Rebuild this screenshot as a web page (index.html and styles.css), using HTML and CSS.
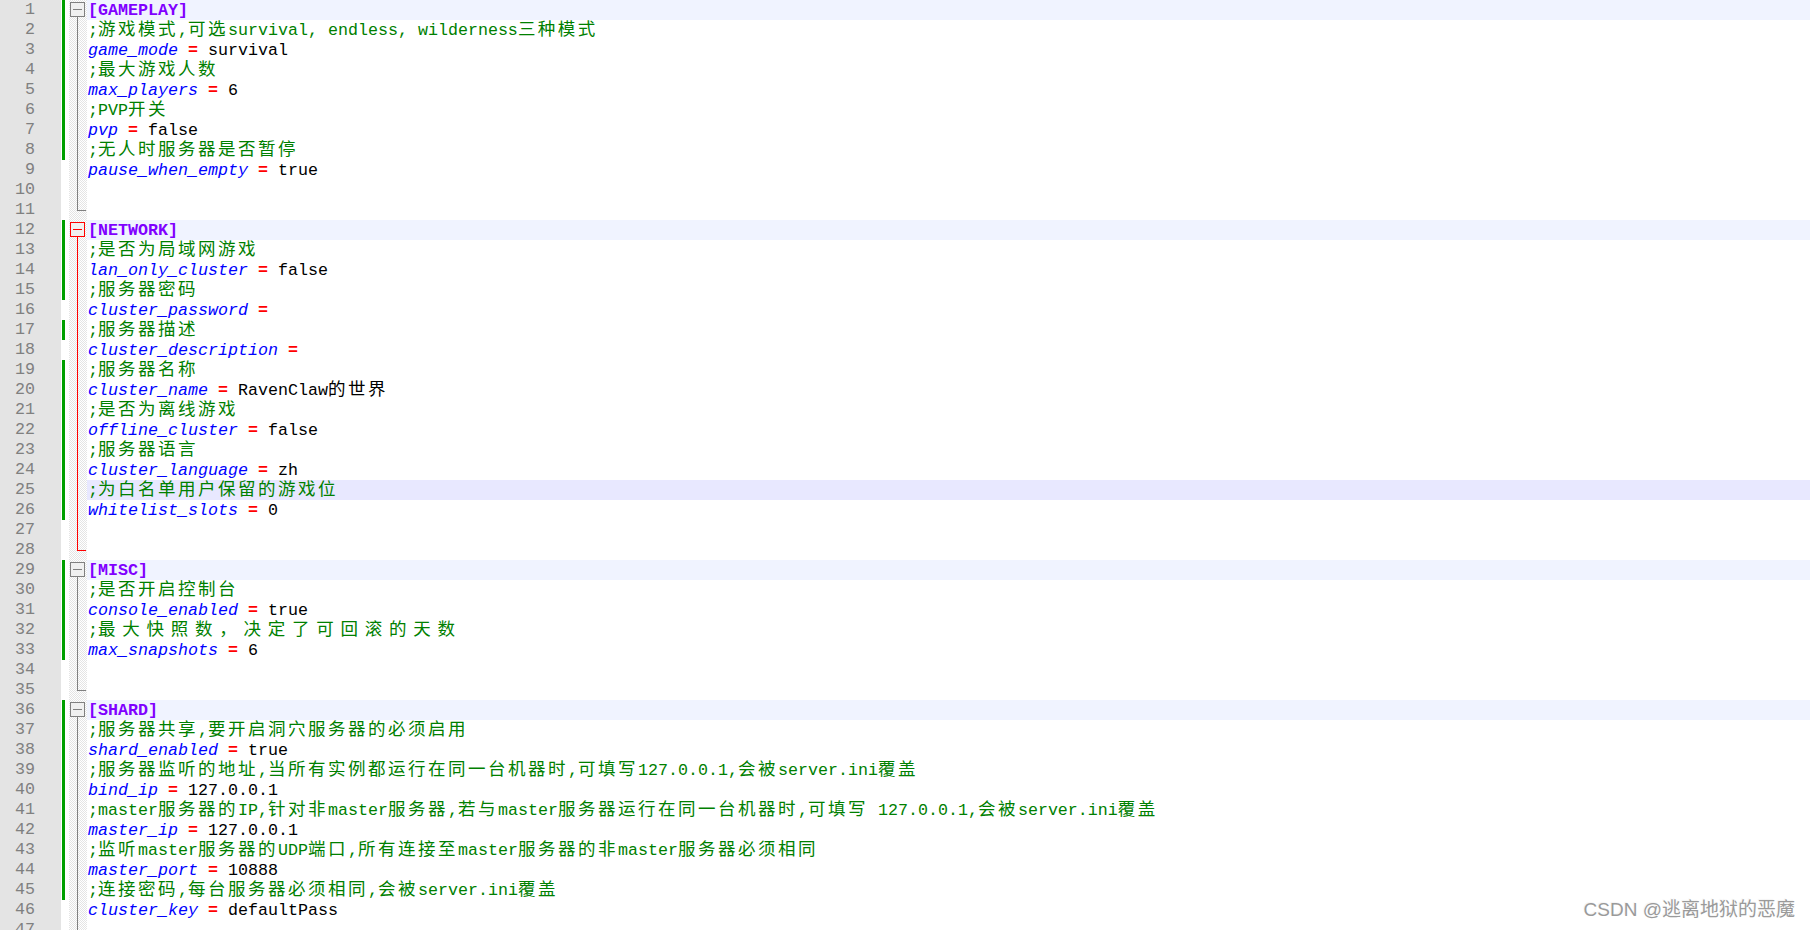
FILE: index.html
```html
<!DOCTYPE html>
<html lang="zh">
<head>
    <meta charset="UTF-8">
    <title>cluster.ini</title>
    <link rel="stylesheet" href="styles.css">
</head>
<body>
    <div class="editor">
        <div class="row"><span class="ln">1</span><span class="bm"></span><span class="ch mod"></span><span class="fold head"><i></i></span><span class="code hd"><span class="s">[GAMEPLAY]</span></span></div>
        <div class="row"><span class="ln">2</span><span class="bm"></span><span class="ch mod"></span><span class="fold body"></span><span class="code"><span class="c">;<b>游戏模式</b>,<b>可选</b>survival, endless, wilderness<b>三种模式</b></span></span></div>
        <div class="row"><span class="ln">3</span><span class="bm"></span><span class="ch mod"></span><span class="fold body"></span><span class="code"><span class="k">game_mode</span> <span class="e">=</span> survival</span></div>
        <div class="row"><span class="ln">4</span><span class="bm"></span><span class="ch mod"></span><span class="fold body"></span><span class="code"><span class="c">;<b>最大游戏人数</b></span></span></div>
        <div class="row"><span class="ln">5</span><span class="bm"></span><span class="ch mod"></span><span class="fold body"></span><span class="code"><span class="k">max_players</span> <span class="e">=</span> 6</span></div>
        <div class="row"><span class="ln">6</span><span class="bm"></span><span class="ch mod"></span><span class="fold body"></span><span class="code"><span class="c">;PVP<b>开关</b></span></span></div>
        <div class="row"><span class="ln">7</span><span class="bm"></span><span class="ch mod"></span><span class="fold body"></span><span class="code"><span class="k">pvp</span> <span class="e">=</span> false</span></div>
        <div class="row"><span class="ln">8</span><span class="bm"></span><span class="ch mod"></span><span class="fold body"></span><span class="code"><span class="c">;<b>无人时服务器是否暂停</b></span></span></div>
        <div class="row"><span class="ln">9</span><span class="bm"></span><span class="ch"></span><span class="fold body"></span><span class="code"><span class="k">pause_when_empty</span> <span class="e">=</span> true</span></div>
        <div class="row"><span class="ln">10</span><span class="bm"></span><span class="ch"></span><span class="fold body"></span><span class="code"></span></div>
        <div class="row"><span class="ln">11</span><span class="bm"></span><span class="ch"></span><span class="fold end"></span><span class="code"></span></div>

        <div class="row"><span class="ln">12</span><span class="bm"></span><span class="ch mod"></span><span class="fold head red"><i></i></span><span class="code hd"><span class="s">[NETWORK]</span></span></div>
        <div class="row"><span class="ln">13</span><span class="bm"></span><span class="ch mod"></span><span class="fold body red"></span><span class="code"><span class="c">;<b>是否为局域网游戏</b></span></span></div>
        <div class="row"><span class="ln">14</span><span class="bm"></span><span class="ch mod"></span><span class="fold body red"></span><span class="code"><span class="k">lan_only_cluster</span> <span class="e">=</span> false</span></div>
        <div class="row"><span class="ln">15</span><span class="bm"></span><span class="ch mod"></span><span class="fold body red"></span><span class="code"><span class="c">;<b>服务器密码</b></span></span></div>
        <div class="row"><span class="ln">16</span><span class="bm"></span><span class="ch"></span><span class="fold body red"></span><span class="code"><span class="k">cluster_password</span> <span class="e">=</span></span></div>
        <div class="row"><span class="ln">17</span><span class="bm"></span><span class="ch mod"></span><span class="fold body red"></span><span class="code"><span class="c">;<b>服务器描述</b></span></span></div>
        <div class="row"><span class="ln">18</span><span class="bm"></span><span class="ch"></span><span class="fold body red"></span><span class="code"><span class="k">cluster_description</span> <span class="e">=</span></span></div>
        <div class="row"><span class="ln">19</span><span class="bm"></span><span class="ch mod"></span><span class="fold body red"></span><span class="code"><span class="c">;<b>服务器名称</b></span></span></div>
        <div class="row"><span class="ln">20</span><span class="bm"></span><span class="ch mod"></span><span class="fold body red"></span><span class="code"><span class="k">cluster_name</span> <span class="e">=</span> RavenClaw<b>的世界</b></span></div>
        <div class="row"><span class="ln">21</span><span class="bm"></span><span class="ch mod"></span><span class="fold body red"></span><span class="code"><span class="c">;<b>是否为离线游戏</b></span></span></div>
        <div class="row"><span class="ln">22</span><span class="bm"></span><span class="ch mod"></span><span class="fold body red"></span><span class="code"><span class="k">offline_cluster</span> <span class="e">=</span> false</span></div>
        <div class="row"><span class="ln">23</span><span class="bm"></span><span class="ch mod"></span><span class="fold body red"></span><span class="code"><span class="c">;<b>服务器语言</b></span></span></div>
        <div class="row"><span class="ln">24</span><span class="bm"></span><span class="ch mod"></span><span class="fold body red"></span><span class="code"><span class="k">cluster_language</span> <span class="e">=</span> zh</span></div>
        <div class="row"><span class="ln">25</span><span class="bm"></span><span class="ch mod"></span><span class="fold body red"></span><span class="code cur"><span class="c">;<b>为白名单用户保留的游戏位</b></span></span></div>
        <div class="row"><span class="ln">26</span><span class="bm"></span><span class="ch mod"></span><span class="fold body red"></span><span class="code"><span class="k">whitelist_slots</span> <span class="e">=</span> 0</span></div>
        <div class="row"><span class="ln">27</span><span class="bm"></span><span class="ch"></span><span class="fold body red"></span><span class="code"></span></div>
        <div class="row"><span class="ln">28</span><span class="bm"></span><span class="ch"></span><span class="fold end red"></span><span class="code"></span></div>

        <div class="row"><span class="ln">29</span><span class="bm"></span><span class="ch mod"></span><span class="fold head"><i></i></span><span class="code hd"><span class="s">[MISC]</span></span></div>
        <div class="row"><span class="ln">30</span><span class="bm"></span><span class="ch mod"></span><span class="fold body"></span><span class="code"><span class="c">;<b>是否开启控制台</b></span></span></div>
        <div class="row"><span class="ln">31</span><span class="bm"></span><span class="ch mod"></span><span class="fold body"></span><span class="code"><span class="k">console_enabled</span> <span class="e">=</span> true</span></div>
        <div class="row"><span class="ln">32</span><span class="bm"></span><span class="ch mod"></span><span class="fold body"></span><span class="code"><span class="c">;<b class="spread">最大快照数，决定了可回滚的天数</b></span></span></div>
        <div class="row"><span class="ln">33</span><span class="bm"></span><span class="ch mod"></span><span class="fold body"></span><span class="code"><span class="k">max_snapshots</span> <span class="e">=</span> 6</span></div>
        <div class="row"><span class="ln">34</span><span class="bm"></span><span class="ch"></span><span class="fold body"></span><span class="code"></span></div>
        <div class="row"><span class="ln">35</span><span class="bm"></span><span class="ch"></span><span class="fold end"></span><span class="code"></span></div>

        <div class="row"><span class="ln">36</span><span class="bm"></span><span class="ch mod"></span><span class="fold head"><i></i></span><span class="code hd"><span class="s">[SHARD]</span></span></div>
        <div class="row"><span class="ln">37</span><span class="bm"></span><span class="ch mod"></span><span class="fold body"></span><span class="code"><span class="c">;<b>服务器共享</b>,<b>要开启洞穴服务器的必须启用</b></span></span></div>
        <div class="row"><span class="ln">38</span><span class="bm"></span><span class="ch mod"></span><span class="fold body"></span><span class="code"><span class="k">shard_enabled</span> <span class="e">=</span> true</span></div>
        <div class="row"><span class="ln">39</span><span class="bm"></span><span class="ch mod"></span><span class="fold body"></span><span class="code"><span class="c">;<b>服务器监听的地址</b>,<b>当所有实例都运行在同一台机器时</b>,<b>可填写</b>127.0.0.1,<b>会被</b>server.ini<b>覆盖</b></span></span></div>
        <div class="row"><span class="ln">40</span><span class="bm"></span><span class="ch mod"></span><span class="fold body"></span><span class="code"><span class="k">bind_ip</span> <span class="e">=</span> 127.0.0.1</span></div>
        <div class="row"><span class="ln">41</span><span class="bm"></span><span class="ch mod"></span><span class="fold body"></span><span class="code"><span class="c">;master<b>服务器的</b>IP,<b>针对非</b>master<b>服务器</b>,<b>若与</b>master<b>服务器运行在同一台机器时</b>,<b>可填写</b> 127.0.0.1,<b>会被</b>server.ini<b>覆盖</b></span></span></div>
        <div class="row"><span class="ln">42</span><span class="bm"></span><span class="ch mod"></span><span class="fold body"></span><span class="code"><span class="k">master_ip</span> <span class="e">=</span> 127.0.0.1</span></div>
        <div class="row"><span class="ln">43</span><span class="bm"></span><span class="ch mod"></span><span class="fold body"></span><span class="code"><span class="c">;<b>监听</b>master<b>服务器的</b>UDP<b>端口</b>,<b>所有连接至</b>master<b>服务器的非</b>master<b>服务器必须相同</b></span></span></div>
        <div class="row"><span class="ln">44</span><span class="bm"></span><span class="ch mod"></span><span class="fold body"></span><span class="code"><span class="k">master_port</span> <span class="e">=</span> 10888</span></div>
        <div class="row"><span class="ln">45</span><span class="bm"></span><span class="ch mod"></span><span class="fold body"></span><span class="code"><span class="c">;<b>连接密码</b>,<b>每台服务器必须相同</b>,<b>会被</b>server.ini<b>覆盖</b></span></span></div>
        <div class="row"><span class="ln">46</span><span class="bm"></span><span class="ch"></span><span class="fold body"></span><span class="code"><span class="k">cluster_key</span> <span class="e">=</span> defaultPass</span></div>
        <div class="row"><span class="ln">47</span><span class="bm"></span><span class="ch"></span><span class="fold body"></span><span class="code"></span></div>
    </div>

    <div class="watermark">CSDN @逃离地狱的恶魔</div>
</body>
</html>
```

FILE: styles.css
```css
* {
    margin: 0;
    padding: 0;
    box-sizing: border-box;
}

body {
    width: 1810px;
    height: 930px;
    overflow: hidden;
    background: #ffffff;
    position: relative;
    font-family: 'Liberation Mono', 'Noto Sans CJK SC', monospace;
    font-size: 16.67px;
    color: #000000;
}

.editor {
    display: flex;
    flex-direction: column;
}

.row {
    display: flex;
    height: 20px;
    line-height: 20px;
    white-space: pre;
}

/* margins */
.ln {
    width: 40px;
    padding-right: 5px;
    text-align: right;
    color: #808080;
    background: #e4e4e4;
}

.bm {
    width: 21px;
    background: #e4e4e4;
}

.ch {
    width: 8px;
}

.ch.mod {
    background: linear-gradient(#00a000, #00a000) 1px 0 / 3px 100% no-repeat;
}

.fold {
    --fc: #808080;
    --checker: repeating-conic-gradient(#e4e4e4 0 25%, #ffffff 0 50%) 0 0 / 2px 2px;
    width: 18px;
    background: var(--checker);
}

.fold.red {
    --fc: #ff0000;
}

.fold.body {
    background:
        linear-gradient(var(--fc), var(--fc)) 8px 0 / 1px 100% no-repeat,
        var(--checker);
}

.fold.end {
    background:
        linear-gradient(var(--fc), var(--fc)) 8px 0 / 1px 11px no-repeat,
        linear-gradient(var(--fc), var(--fc)) 8px 10px / 9px 1px no-repeat,
        var(--checker);
}

.fold.head {
    background:
        linear-gradient(var(--fc), var(--fc)) 8px 16px / 1px 4px no-repeat,
        var(--checker);
}

.fold.head i {
    display: block;
    width: 15px;
    height: 15px;
    margin: 2px 0 0 1px;
    border: 1px solid var(--fc);
    background:
        linear-gradient(var(--fc), var(--fc)) center / 9px 1px no-repeat,
        #f0f0f0;
}

/* text area */
.code {
    flex: 1;
    padding: 1px 0 0 1px;
}

.code.hd {
    background: #f0f3ff;
}

.code.cur {
    background: #e8e8ff;
}

.s {
    color: #8000ff;
    font-weight: bold;
}

.c {
    color: #008000;
}

.k {
    color: #0000ff;
    font-style: italic;
}

.e {
    color: #ff0000;
    font-weight: bold;
}

/* wide chars take two cells */
.code b {
    font-family: 'Noto Sans CJK SC', sans-serif;
    font-weight: normal;
    font-size: 17.5px;
    letter-spacing: 2.5px;
    line-height: 0;
}

.code b.spread {
    letter-spacing: 6.75px;
}

.watermark {
    position: absolute;
    right: 15px;
    bottom: 9px;
    font-family: 'Liberation Sans', 'Noto Sans CJK SC', sans-serif;
    font-size: 19px;
    line-height: 22px;
    color: #9a9a9a;
    text-shadow: 1px 1px 1px #ffffff, -1px -1px 1px #f4f4f4;
}
```
